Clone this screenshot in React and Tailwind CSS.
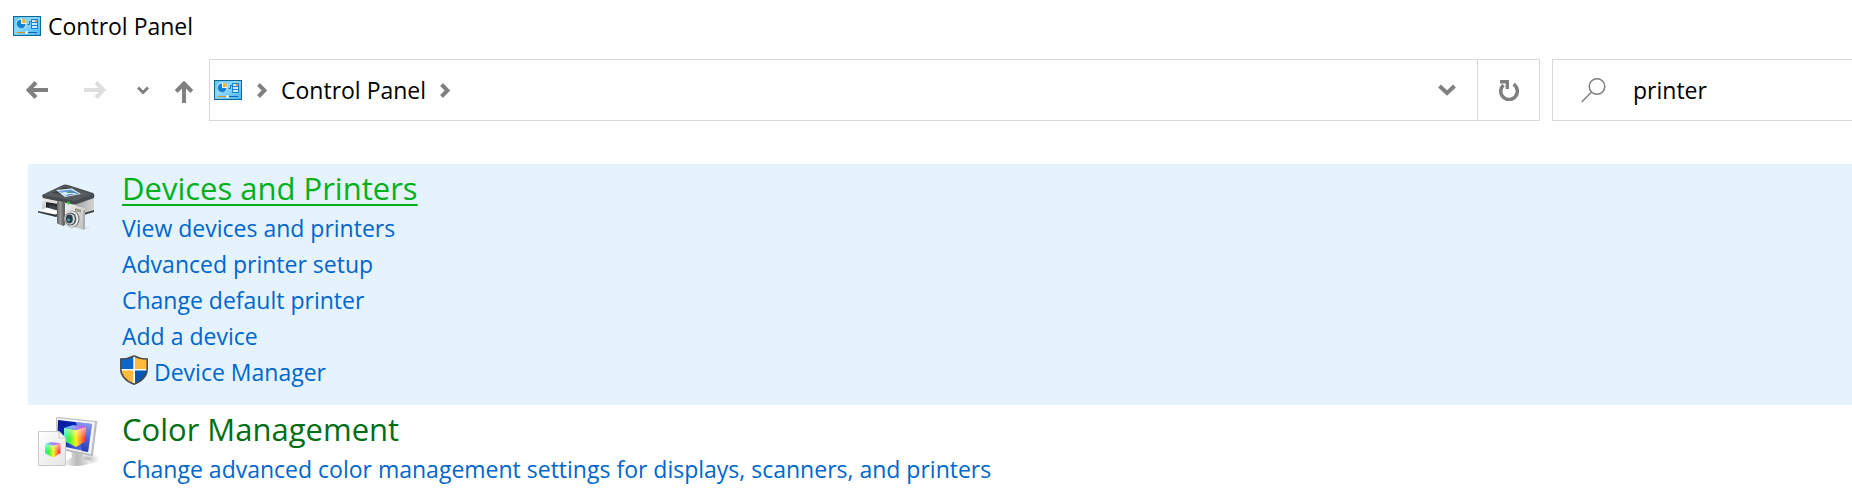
import React, { useState } from "react";

function ControlPanelIcon() {
  return (
    <svg viewBox="0 0 28 20" className="h-5 w-7 shrink-0" aria-hidden="true">
      <defs>
        <linearGradient id="cp-fill" x1="0" y1="0" x2="1" y2="1">
          <stop offset="0" stopColor="#5cc3f5" />
          <stop offset="0.4" stopColor="#8ed9fc" />
          <stop offset="1" stopColor="#45b5f2" />
        </linearGradient>
      </defs>
      <rect x="0.5" y="0.5" width="27" height="19" fill="url(#cp-fill)" stroke="#0e6699" />
      <circle cx="8.3" cy="7.7" r="5.1" fill="#e9f7ff" />
      <path d="M8 8V3.4A4.5 4.5 0 1 0 12.6 8Z" fill="#1583d3" />
      <path d="M9 7V2.8A4.3 4.3 0 0 1 13 7Z" fill="#ffb02e" />
      <path d="M14.5 8.5h2V5.5h2" fill="none" stroke="#1671b5" />
      <rect x="18.5" y="3.5" width="6" height="9" fill="#c4ecff" stroke="#1c84cc" />
      <path d="M19 6.5h5M19 9.5h5" stroke="#1c84cc" />
      <path d="M22 5h2" stroke="#ff7e20" strokeWidth="1.4" />
      <path d="M4 16.5h8" stroke="#d99325" />
      <path d="M15 16.5h9" stroke="#0c6cae" />
      <rect x="12.5" y="15" width="2" height="3" fill="#f2fbff" />
    </svg>
  );
}

function PrinterIcon() {
  return (
    <svg viewBox="0 0 62 50" className="h-[50px] w-[62px]" aria-hidden="true">
      <defs>
        <linearGradient id="pr-front" x1="0" y1="0" x2="0" y2="1">
          <stop offset="0" stopColor="#f1f1f1" />
          <stop offset="1" stopColor="#a9a9a9" />
        </linearGradient>
        <linearGradient id="pr-side" x1="0" y1="0" x2="1" y2="0">
          <stop offset="0" stopColor="#a5a5a5" />
          <stop offset="1" stopColor="#d4d4d4" />
        </linearGradient>
        <linearGradient id="pr-grip" x1="0" y1="0" x2="1" y2="0">
          <stop offset="0" stopColor="#5e5e5e" />
          <stop offset="0.45" stopColor="#9b9b9b" />
          <stop offset="1" stopColor="#5b5b5b" />
        </linearGradient>
        <linearGradient id="pr-cam" x1="0" y1="0" x2="1" y2="1">
          <stop offset="0" stopColor="#f0f0ee" />
          <stop offset="1" stopColor="#bdbdbd" />
        </linearGradient>
        <linearGradient id="pr-screen" x1="0" y1="0" x2="1" y2="1">
          <stop offset="0" stopColor="#8abcf4" />
          <stop offset="1" stopColor="#2563b0" />
        </linearGradient>
      </defs>
      <path d="M46 44l6-2-3 3z" fill="#b8cbd8" opacity="0.6" />
      <path d="M4 13L38 20V34L4 28Z" fill="url(#pr-front)" />
      <path d="M38 20L56 13V27L38 32Z" fill="url(#pr-side)" />
      <path d="M46 29l10-3v2l-10 3z" fill="#3f4549" />
      <path d="M4 11L25 1Q27 0 30 1L55 9Q57 10 56 14L39 20Q36 21 33 20L5 14Z" fill="#464b4e" />
      <path d="M5 11L26 1.5L54 10L37 17Z" fill="#565c60" />
      <path d="M14 9L26 3l13 4-12 4z" fill="#3b4043" />
      <path d="M18 6L34 4.5L43 10L27 13Z" fill="#eef4f8" />
      <path d="M20 6.7L33 5.5L41 9.7L28 12Z" fill="url(#pr-screen)" />
      <path d="M23 9q5-2 9 0l7 0-3 1.4q-5-1-8 1z" fill="#d9f2f5" />
      <path d="M28 9q2-2 6-1.6l-1 1.2z" fill="#42965d" />
      <path d="M8 18L20 20V28L8 25Z" fill="#22272b" />
      <path d="M11 21l9 1v6l-9-2z" fill="#3c4349" />
      <path d="M0 27L9 23.5L21 27L18 32Z" fill="#fbfbfb" />
      <path d="M0 27v1.5l18 4.5 2-1v-2l-3 0.5z" fill="#34393d" />
      <path d="M20 17l6 1v24l-6-2q-1 0-1-2V18z" fill="url(#pr-grip)" />
      <path d="M25 18l2 1v22l-2 1z" fill="#666" />
      <path d="M27 21L31 19.5L47 24.500v20q0 2-2 1L27 41Z" fill="url(#pr-cam)" />
      <path d="M29.500 17.500h2v3h-2z" fill="#20e43c" />
      <path d="M37 24l6 1.500v3l-6-1z" fill="#9da082" />
      <path d="M45 26l2 0v19l-2 1z" fill="#aeaeae" />
      <ellipse cx="34" cy="35" rx="7.600" ry="8.600" fill="#6f7375" />
      <ellipse cx="33.400" cy="35" rx="7" ry="8" fill="#eaeaea" />
      <ellipse cx="32.600" cy="35" rx="5.800" ry="6.600" fill="#555d61" />
      <ellipse cx="32" cy="35" rx="4.800" ry="5.600" fill="#d4d8da" />
      <ellipse cx="31.400" cy="35" rx="3.400" ry="4.400" fill="#243e4b" />
      <circle cx="30.600" cy="36" r="1.400" fill="#59a7af" />
    </svg>
  );
}

function Cube({ id, transform }) {
  return (
    <g transform={transform}>
      <defs>
        <linearGradient id={id + "-left"} x1="0" y1="0" x2="1" y2="0">
          <stop offset="0" stopColor="#1ff0c0" />
          <stop offset="0.45" stopColor="#3cf53c" />
          <stop offset="1" stopColor="#f7f31e" />
        </linearGradient>
        <linearGradient id={id + "-right"} x1="0" y1="0" x2="1" y2="0">
          <stop offset="0" stopColor="#fff01e" />
          <stop offset="0.5" stopColor="#ff8a35" />
          <stop offset="1" stopColor="#fb1c50" />
        </linearGradient>
        <linearGradient id={id + "-shade"} x1="0" y1="0" x2="0" y2="1">
          <stop offset="0" stopColor="#fff" stopOpacity="0.6" />
          <stop offset="0.55" stopColor="#fff" stopOpacity="0" />
        </linearGradient>
        <linearGradient id={id + "-top"} x1="0" y1="0" x2="1" y2="0">
          <stop offset="0" stopColor="#42def9" />
          <stop offset="0.5" stopColor="#9895ff" />
          <stop offset="1" stopColor="#f03af2" />
        </linearGradient>
      </defs>
      <path d="M0 3L12 5V22L0 16Z" fill={"url(#" + id + "-left)"} />
      <path d="M12 5L22 2V16L12 22Z" fill={"url(#" + id + "-right)"} />
      <path d="M0 3L12 5L22 2V16L12 22L0 16Z" fill={"url(#" + id + "-shade)"} />
      <path d="M0 3L9 0L22 2L12 5Z" fill={"url(#" + id + "-top)"} />
    </g>
  );
}

function ColorIcon() {
  return (
    <svg viewBox="0 0 62 50" className="h-[50px] w-[62px]" aria-hidden="true">
      <defs>
        <linearGradient id="cm-screen" x1="0" y1="0" x2="1" y2="0.6">
          <stop offset="0" stopColor="#0b1a95" />
          <stop offset="0.4" stopColor="#0822b8" />
          <stop offset="1" stopColor="#647be8" />
        </linearGradient>
        <linearGradient id="cm-glow" x1="0" y1="0" x2="0" y2="1">
          <stop offset="0" stopColor="#a9b9ff" />
          <stop offset="1" stopColor="#0718a0" stopOpacity="0.9" />
        </linearGradient>
        <linearGradient id="cm-stand" x1="0" y1="0" x2="1" y2="0">
          <stop offset="0" stopColor="#f5f5f5" />
          <stop offset="0.5" stopColor="#b9b9b9" />
          <stop offset="1" stopColor="#e9e9e9" />
        </linearGradient>
        <linearGradient id="cm-page" x1="0" y1="0" x2="1" y2="1">
          <stop offset="0" stopColor="#fff" />
          <stop offset="1" stopColor="#e5e5e5" />
        </linearGradient>
        <radialGradient id="cm-shadow">
          <stop offset="0" stopColor="#777" stopOpacity="0.6" />
          <stop offset="1" stopColor="#999" stopOpacity="0" />
        </radialGradient>
      </defs>
      <ellipse cx="49" cy="42" rx="13" ry="6" fill="url(#cm-shadow)" />
      <path d="M33 34l12 3 1 5q7 1 6 3-3 4-14 4-11 0-12-4 6-3 8-5z" fill="url(#cm-stand)" />
      <path d="M18 1Q18 0 20 0L58 4Q60 4 59 6L55 38Q55 40 53 39L18 32Z" fill="#b9bcbf" />
      <path d="M19 1L57 5L53 37L18 30Z" fill="#f1f2f3" />
      <path d="M20 3L54 7L50 35L19 28Z" fill="url(#cm-screen)" />
      <path d="M38 5l16 2-4 28-6-1z" fill="url(#cm-glow)" opacity="0.75" />
      <Cube id="cube-large" transform="translate(26 8)" />
      <path d="M0.500 14.500H21L27.500 21V48.500H0.500Z" fill="url(#cm-page)" stroke="#cbcbcb" />
      <path d="M21 14.500v6.500h6.500z" fill="#f9f9f9" stroke="#cacaca" />
      <Cube id="cube-small" transform="translate(7 25) scale(0.7)" />
    </svg>
  );
}

function ShieldIcon() {
  return (
    <svg viewBox="0 0 28 30" className="h-[30px] w-7 shrink-0" aria-hidden="true">
      <defs>
        <clipPath id="shield-shape">
          <path d="M14 0.7Q20 4 27.3 4V14Q27.3 24 14 29.4Q0.7 24 0.7 14V4Q8 4 14 0.7Z" />
        </clipPath>
      </defs>
      <g clipPath="url(#shield-shape)">
        <path d="M0 0h28v30H0z" fill="#fff" />
        <path d="M0 0h13.3v14H0z" fill="#0b68c8" />
        <path d="M15 0h13v14H15z" fill="#ffb93b" />
        <path d="M0 15.6h13.3V30H0z" fill="#ffb93b" />
        <path d="M15 15.6h13V30H15z" fill="#0b55b4" />
      </g>
      <path d="M14 0.9Q20 4 27.2 4V14Q27.2 24 14 29.2Q0.8 24 0.8 14V4Q8 4 14 0.9Z" fill="none" stroke="#4b4b4b" strokeWidth="1.5" />
    </svg>
  );
}

function Chevron({ down }) {
  return down ? (
    <svg viewBox="0 0 18 12" className="h-3 w-[18px]" aria-hidden="true">
      <path d="M1.5 2L9 9L16.5 2" fill="none" stroke="#808080" strokeWidth="4" />
    </svg>
  ) : (
    <svg viewBox="0 0 10 15" className="h-[15px] w-2.5 shrink-0" aria-hidden="true">
      <path d="M1.5 1.5L7.5 7.5L1.5 13.5" fill="none" stroke="#808080" strokeWidth="4" />
    </svg>
  );
}

function HorizontalArrow({ back }) {
  return (
    <svg viewBox="0 0 22 18" className="h-[18px] w-[22px]" aria-hidden="true">
      {back ? (
        <path d="M22 9H2.5M10 1.5L2.5 9L10 16.5" fill="none" stroke="#808080" strokeWidth="4" />
      ) : (
        <path d="M0 9H19.5M12 1.5L19.5 9L12 16.5" fill="none" stroke="#dedede" strokeWidth="4" />
      )}
    </svg>
  );
}

const link = "flex h-9 items-center text-[#0066cc] hover:underline";

function Category({ icon, title, active, children }) {
  return (
    <section className={active ? "flex bg-[#e5f3ff] pt-0.5 pb-[15px] pl-2.5" : "flex pt-0.5 pb-[15px] pl-2.5"}>
      <div className="w-[84px] shrink-0 pt-2.5">{icon}</div>
      <div>
        <h2 className="text-[31px] leading-[44px]">
          <a
            href="#"
            className={
              active
                ? "text-[#00b01a] underline decoration-2 underline-offset-4"
                : "text-[#006e12]"
            }
          >
            {title}
          </a>
        </h2>
        <ul>{children}</ul>
      </div>
    </section>
  );
}

export default function App() {
  const [query, setQuery] = useState("printer");
  return (
    <div className="min-h-screen overflow-hidden bg-white font-['Open_Sans','Noto_Sans',sans-serif] text-[23px] text-black">
      <header className="flex h-[51px] items-center gap-[7px] pl-[13px]">
        <ControlPanelIcon />
        <h1 className="leading-9">Control Panel</h1>
      </header>
      <div className="mt-2 flex h-[62px]">
        <nav className="flex w-[209px] shrink-0 items-center pl-[26px]" aria-label="History">
          <button aria-label="Back">
            <HorizontalArrow back />
          </button>
          <button aria-label="Forward" className="ml-9">
            <HorizontalArrow />
          </button>
          <button aria-label="Recent locations" className="ml-[31px]">
            <svg viewBox="0 0 12 9" className="h-[9px] w-3" aria-hidden="true">
              <path d="M1 1.5L6 6.5L11 1.5" fill="none" stroke="#808080" strokeWidth="3" />
            </svg>
          </button>
          <button aria-label="Up" className="ml-[26px] pt-1">
            <svg viewBox="0 0 18 22" className="h-[22px] w-[18px]" aria-hidden="true">
              <path d="M9 22V2.5M1.2 10.5L9 2.5L16.8 10.5" fill="none" stroke="#808080" strokeWidth="4" />
            </svg>
          </button>
        </nav>
        <div className="flex min-w-0 flex-1 border border-[#d9d9d9]">
          <div className="flex flex-1 items-center pl-1">
            <ControlPanelIcon />
            <div className="flex items-center gap-3.5 pl-[15px]">
              <Chevron />
              <button className="leading-9">Control Panel</button>
              <Chevron />
            </div>
          </div>
          <button aria-label="Previous locations" className="flex w-[60px] items-center justify-center">
            <Chevron down />
          </button>
          <button aria-label="Refresh" className="flex w-[62px] items-center justify-center border-l border-[#d9d9d9]">
            <svg viewBox="0 0 20 21" className="h-[21px] w-5" aria-hidden="true">
              <path d="M14.5 4.2A8.300 8.300 0 1 1 4.500 5" fill="none" stroke="#808080" strokeWidth="3.600" />
              <path d="M1 0H10V9H6.600V3.400H1Z" fill="#808080" />
            </svg>
          </button>
        </div>
        <label className="ml-3 flex w-[300px] shrink-0 items-center border-y border-l border-[#d9d9d9] pl-7">
          <svg viewBox="0 0 25 25" className="h-[25px] w-[25px] shrink-0" aria-hidden="true">
            <circle cx="16" cy="8.5" r="7.8" fill="none" stroke="#808080" strokeWidth="1.5" />
            <path d="M10.5 14L0.8 24" stroke="#808080" strokeWidth="1.5" />
          </svg>
          <input
            aria-label="Search Control Panel"
            value={query}
            onChange={(e) => setQuery(e.target.value)}
            className="ml-[27px] min-w-0 flex-1 bg-transparent leading-9 outline-none"
          />
        </label>
      </div>
      <main className="mt-[43px] pl-7">
        <Category title="Devices and Printers" active icon={<div className="pt-2"><PrinterIcon /></div>}>
          <li><a href="#" className={link}>View devices and printers</a></li>
          <li><a href="#" className={link}>Advanced printer setup</a></li>
          <li><a href="#" className={link}>Change default printer</a></li>
          <li><a href="#" className={link}>Add a device</a></li>
          <li className="-ml-0.5">
            <a href="#" className={link}>
              <span className="mr-1.5 pb-1"><ShieldIcon /></span>
              Device Manager
            </a>
          </li>
        </Category>
        <Category title="Color Management" icon={<ColorIcon />}>
          <li>
            <a href="#" className={link}>
              Change advanced color management settings for displays, scanners, and printers
            </a>
          </li>
        </Category>
      </main>
    </div>
  );
}
